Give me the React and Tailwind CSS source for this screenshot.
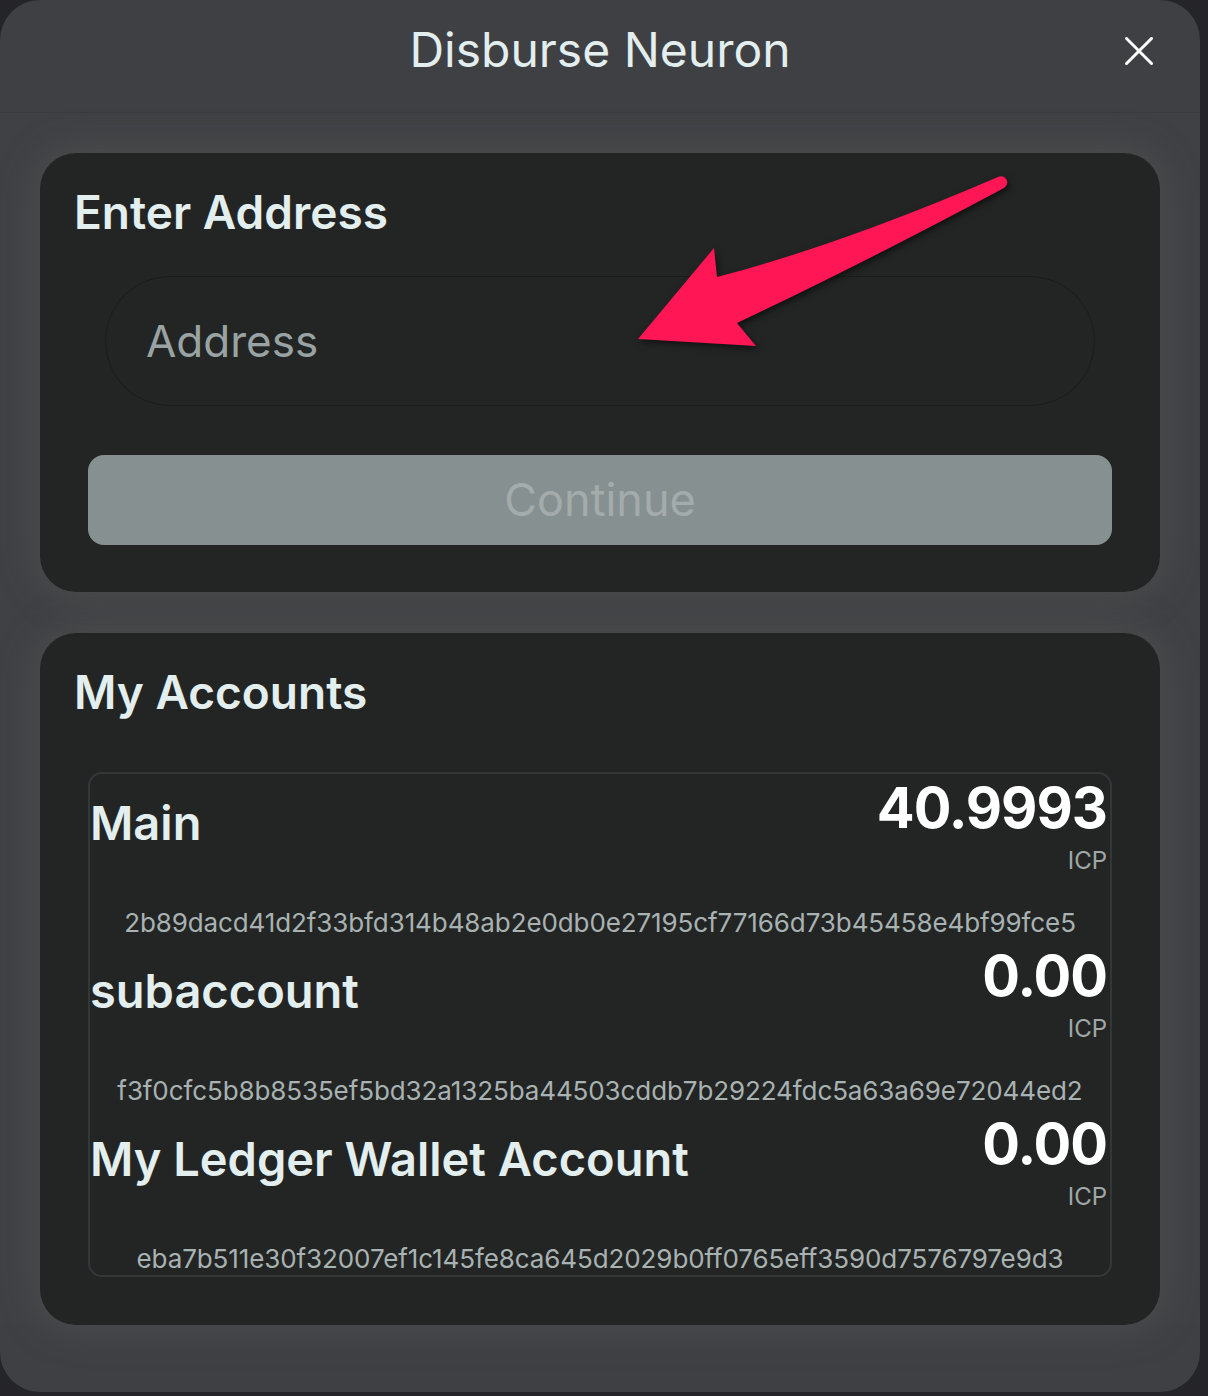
const accounts = [
  {
    name: "Main",
    balance: "40.9993",
    address: "2b89dacd41d2f33bfd314b48ab2e0db0e27195cf77166d73b45458e4bf99fce5",
  },
  {
    name: "subaccount",
    balance: "0.00",
    address: "f3f0cfc5b8b8535ef5bd32a1325ba44503cddb7b29224fdc5a63a69e72044ed2",
  },
  {
    name: "My Ledger Wallet Account",
    balance: "0.00",
    address: "eba7b511e30f32007ef1c145fe8ca645d2029b0ff0765eff3590d7576797e9d3",
  },
];

function CloseIcon() {
  return (
    <svg width="28" height="28" viewBox="0 0 28 28" fill="none">
      <path
        d="M1.5 1.5 L26.5 26.5 M26.5 1.5 L1.5 26.5"
        stroke="#ffffff"
        strokeWidth="3"
        strokeLinecap="square"
      />
    </svg>
  );
}

// pink annotation arrow drawn over the address field
function Arrow() {
  return (
    <svg
      className="pointer-events-none absolute left-0 top-0 drop-shadow-[2px_3px_3px_rgba(0,0,0,0.55)]"
      width="1120"
      height="439"
      viewBox="0 0 1120 439"
    >
      <path
        d="M598 186 L674 95 L677 124 Q800 92 958 24 A6 6 0 0 1 964 35 Q820 112 697 170 L716 193 Z"
        fill="#ff1654"
      />
    </svg>
  );
}

function AccountRow({ account }) {
  return (
    <div className="flex flex-col">
      <div className="flex items-start justify-between pr-[3px] pt-[6px]">
        <span className="mt-[19px] text-[47px] font-semibold leading-none text-[#e3eeee]">
          {account.name}
        </span>
        <div className="flex flex-col items-end">
          <span className="text-[56px] font-bold leading-none tracking-[-1px] text-white">
            {account.balance}
          </span>
          <span className="mt-[13px] text-[24px] leading-none text-[#a0a8a8]">
            ICP
          </span>
        </div>
      </div>
      <p className="mt-[37px] text-center text-[26px] leading-none tracking-[-0.1px] text-[#a9b2b2]">
        {account.address}
      </p>
    </div>
  );
}

export default function App() {
  return (
    <div className="min-h-screen bg-[#252529] font-['Inter',sans-serif]">
      <div className="flex h-[1392px] w-[1200px] flex-col overflow-hidden rounded-[40px] bg-[#3f4044]">
        <header className="relative flex h-[113px] shrink-0 justify-center border-b border-[#3a3b3e] pt-[26px]">
          <h1 className="text-[48px] leading-none text-[#e3eeee]">
            Disburse Neuron
          </h1>
          <button
            type="button"
            aria-label="Close"
            className="absolute right-[47px] top-[37px]"
          >
            <CloseIcon />
          </button>
        </header>

        <div className="flex flex-col gap-[41px] bg-[#404144] px-10 pt-10">
          <section className="relative flex h-[439px] flex-col rounded-[36px] bg-[#232524] px-[34px] pt-[36px] shadow-[0_0_40px_rgba(110,110,110,0.35)]">
            <h2 className="text-[46px] font-semibold leading-none text-[#e3eeee]">
              Enter Address
            </h2>
            <div className="mx-[31px] mt-[41px] flex h-[130px] items-center rounded-full border border-[#1a1b1b] px-[40px]">
              <input
                placeholder="Address"
                className="w-full bg-transparent text-[44px] text-[#e3eeee] outline-none placeholder:text-[#9aa3a3]"
              />
            </div>
            <button
              type="button"
              disabled
              className="mx-[14px] mt-[49px] flex h-[90px] items-center justify-center rounded-[16px] bg-[#879090] text-[45px] text-[#a3abab]"
            >
              Continue
            </button>
            <Arrow />
          </section>

          <section className="flex flex-col rounded-[36px] bg-[#232524] px-[34px] pb-[48px] pt-[36px] shadow-[0_0_40px_rgba(110,110,110,0.35)]">
            <h2 className="text-[46px] font-semibold leading-none text-[#e3eeee]">
              My Accounts
            </h2>
            <div className="mx-[14px] mt-[57px] flex flex-col gap-[6px] rounded-[14px] border-2 border-[#343738] pb-[3px]">
              {accounts.map((account) => (
                <AccountRow key={account.address} account={account} />
              ))}
            </div>
          </section>
        </div>
      </div>
    </div>
  );
}
